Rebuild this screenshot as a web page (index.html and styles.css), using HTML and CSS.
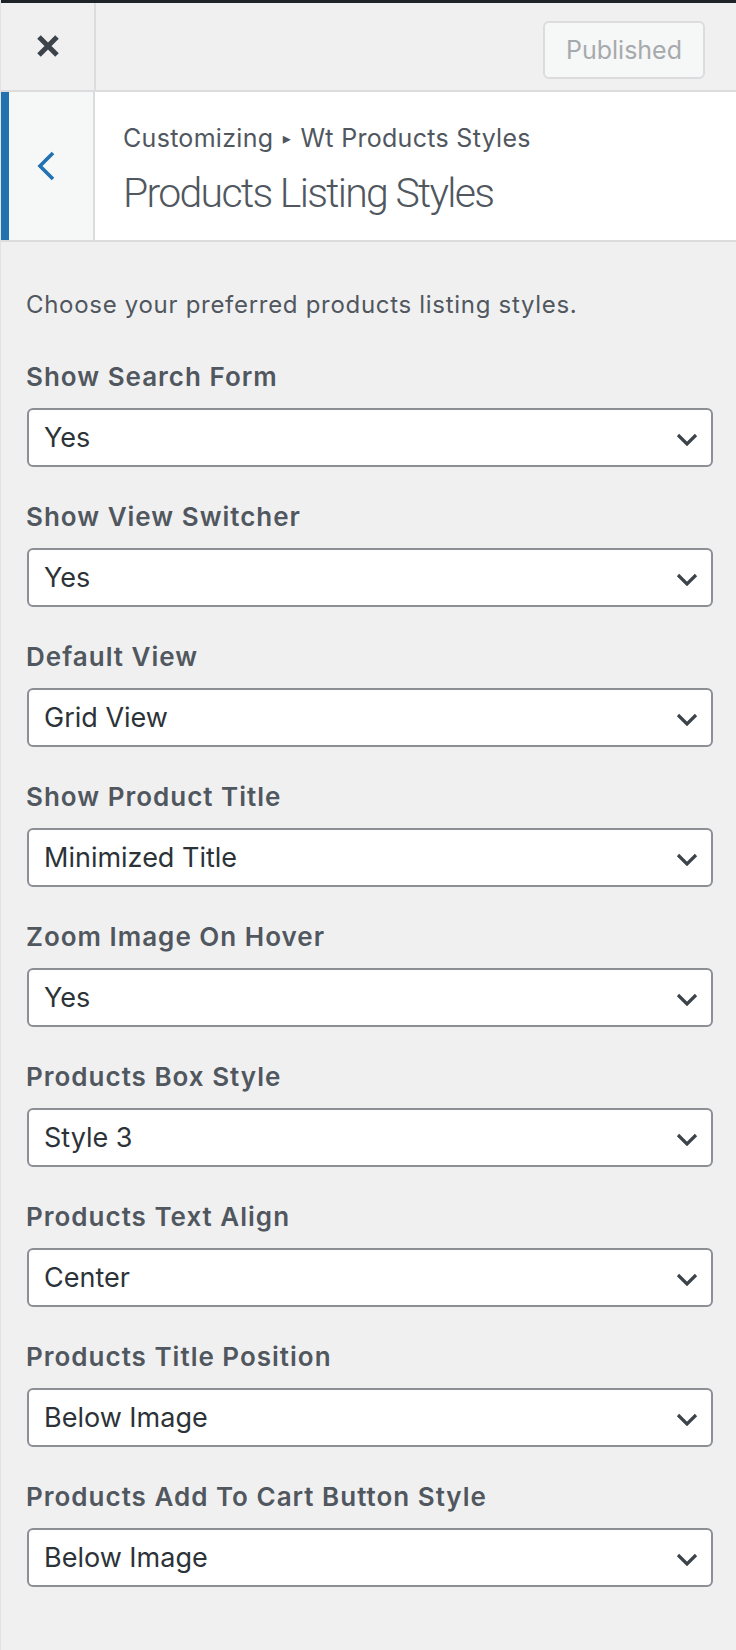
FILE: index.html
```html
<!DOCTYPE html>
<html lang="en">
<head>
<meta charset="utf-8">
<title>Customizer – Products Listing Styles</title>
<link rel="stylesheet" href="styles.css">
</head>
<body>
<div class="topbar"></div>
<header class="header">
  <button class="close" aria-label="Close">
    <svg width="22" height="22" viewBox="0 0 22 22"><path d="M2 2 L20 20 M20 2 L2 20" stroke="#3c434a" stroke-width="5" stroke-linecap="butt" fill="none"/></svg>
  </button>
  <div class="header-actions">
    <button class="published">Published</button>
  </div>
</header>
<section class="section-head">
  <div class="back">
    <svg width="20" height="30" viewBox="0 0 20 30"><path d="M17 2 L4 15 L17 28" stroke="#2271b1" stroke-width="3.6" fill="none" stroke-linejoin="miter"/></svg>
  </div>
  <div class="titles">
    <div class="crumb">Customizing <span class="tri">▸</span> Wt Products Styles</div>
    <h3 class="title">Products Listing Styles</h3>
  </div>
</section>
<main class="controls">
  <p class="desc">Choose your preferred products listing styles.</p>

  <div class="control">
    <label class="label">Show Search Form</label>
    <div class="select"><select><option>Yes</option></select><svg class="chev" width="22" height="13" viewBox="0 0 22 13"><path d="M2 2 L11 11 L20 2" stroke="#3c434a" stroke-width="3.2" fill="none"/></svg></div>
  </div>
  <div class="control">
    <label class="label">Show View Switcher</label>
    <div class="select"><select><option>Yes</option></select><svg class="chev" width="22" height="13" viewBox="0 0 22 13"><path d="M2 2 L11 11 L20 2" stroke="#3c434a" stroke-width="3.2" fill="none"/></svg></div>
  </div>
  <div class="control">
    <label class="label">Default View</label>
    <div class="select"><select><option>Grid View</option></select><svg class="chev" width="22" height="13" viewBox="0 0 22 13"><path d="M2 2 L11 11 L20 2" stroke="#3c434a" stroke-width="3.2" fill="none"/></svg></div>
  </div>
  <div class="control">
    <label class="label">Show Product Title</label>
    <div class="select"><select><option>Minimized Title</option></select><svg class="chev" width="22" height="13" viewBox="0 0 22 13"><path d="M2 2 L11 11 L20 2" stroke="#3c434a" stroke-width="3.2" fill="none"/></svg></div>
  </div>
  <div class="control">
    <label class="label">Zoom Image On Hover</label>
    <div class="select"><select><option>Yes</option></select><svg class="chev" width="22" height="13" viewBox="0 0 22 13"><path d="M2 2 L11 11 L20 2" stroke="#3c434a" stroke-width="3.2" fill="none"/></svg></div>
  </div>
  <div class="control">
    <label class="label">Products Box Style</label>
    <div class="select"><select><option>Style 3</option></select><svg class="chev" width="22" height="13" viewBox="0 0 22 13"><path d="M2 2 L11 11 L20 2" stroke="#3c434a" stroke-width="3.2" fill="none"/></svg></div>
  </div>
  <div class="control">
    <label class="label">Products Text Align</label>
    <div class="select"><select><option>Center</option></select><svg class="chev" width="22" height="13" viewBox="0 0 22 13"><path d="M2 2 L11 11 L20 2" stroke="#3c434a" stroke-width="3.2" fill="none"/></svg></div>
  </div>
  <div class="control">
    <label class="label">Products Title Position</label>
    <div class="select"><select><option>Below Image</option></select><svg class="chev" width="22" height="13" viewBox="0 0 22 13"><path d="M2 2 L11 11 L20 2" stroke="#3c434a" stroke-width="3.2" fill="none"/></svg></div>
  </div>
  <div class="control">
    <label class="label">Products Add To Cart Button Style</label>
    <div class="select"><select><option>Below Image</option></select><svg class="chev" width="22" height="13" viewBox="0 0 22 13"><path d="M2 2 L11 11 L20 2" stroke="#3c434a" stroke-width="3.2" fill="none"/></svg></div>
  </div>
</main>
</body>
</html>
```

FILE: styles.css
```css
* { box-sizing: border-box; }

html, body {
  margin: 0;
  padding: 0;
  background: #f0f0f1;
}

body {
  font-family: Inter, "Noto Sans", "Liberation Sans", sans-serif;
  color: #50575e;
  min-height: 1650px;
  border-left: 1px solid #e2e2e4;
}

.topbar {
  height: 3px;
  background: #1d2327;
}

.header {
  display: flex;
  height: 89px;
  border-bottom: 2px solid #dcdcde;
  background: #f0f0f1;
}

.close {
  width: 95px;
  height: 87px;
  border: 0;
  border-right: 2px solid #dcdcde;
  background: transparent;
  display: flex;
  align-items: center;
  justify-content: center;
  padding: 0 0 2px;
}

.header-actions {
  flex: 1;
  display: flex;
  justify-content: flex-end;
  align-items: flex-start;
  padding: 18px 31px 0 0;
}

.published {
  height: 58px;
  padding: 0 21px;
  font-family: Inter, "Noto Sans", "Liberation Sans", sans-serif;
  font-size: 25px;
  color: #a7aaad;
  background: #f6f7f7;
  border: 2px solid #dcdcde;
  border-radius: 6px;
}

.section-head {
  display: flex;
  height: 150px;
  background: #fff;
  border-bottom: 2px solid #dcdcde;
}

.back {
  width: 94px;
  border-left: 8px solid #2271b1;
  border-right: 2px solid #dcdcde;
  background: #f6f7f7;
  display: flex;
  align-items: center;
  justify-content: center;
  padding-right: 10px;
}

.titles {
  padding: 30px 0 0 28px;
}

.crumb {
  font-size: 25px;
  line-height: 32px;
  letter-spacing: 0.3px;
  color: #50575e;
}

.tri {
  font-family: "DejaVu Sans", sans-serif;
  font-size: 16px;
  position: relative;
  top: -3px;
  margin: 0 2px;
}

.title {
  margin: 9px 0 0;
  font-family: Roboto, Inter, "Liberation Sans", sans-serif;
  font-size: 41px;
  line-height: 52px;
  font-weight: 300;
  letter-spacing: -1.7px;
  color: #50575e;
}

.controls {
  padding: 47px 23px 40px 25px;
}

.desc {
  margin: 0 0 40px;
  font-size: 24px;
  line-height: 32px;
  letter-spacing: 0.7px;
  color: #50575e;
}

.control {
  margin-bottom: 34px;
}

.label {
  display: block;
  font-size: 26px;
  line-height: 32px;
  font-weight: 600;
  letter-spacing: 1px;
  color: #50575e;
  margin-bottom: 15px;
}

.select {
  position: relative;
  margin-left: 1px;
}

.select select {
  -webkit-appearance: none;
  appearance: none;
  display: block;
  width: 100%;
  height: 59px;
  padding: 0 60px 0 15px;
  font-family: Inter, "Noto Sans", "Liberation Sans", sans-serif;
  font-size: 27px;
  color: #2c3338;
  background: #fff;
  border: 2px solid #8c8f94;
  border-radius: 6px;
}

.chev {
  position: absolute;
  right: 15px;
  top: 25px;
  pointer-events: none;
}
```
